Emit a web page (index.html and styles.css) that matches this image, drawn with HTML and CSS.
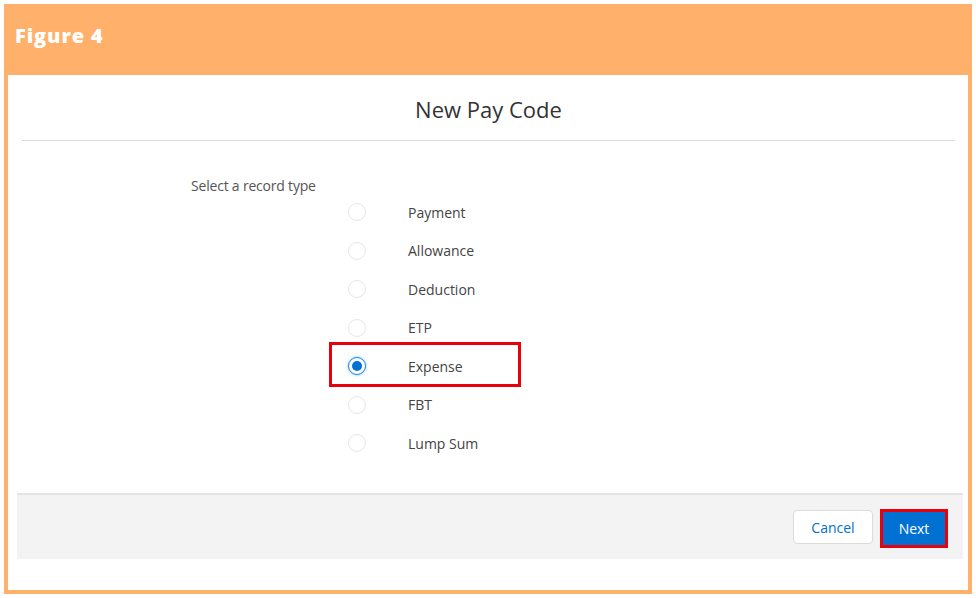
FILE: index.html
```html
<!DOCTYPE html>
<html lang="en">
<head>
    <meta charset="UTF-8">
    <title>Figure 4 - New Pay Code</title>
    <link rel="stylesheet" href="styles.css">
</head>
<body>
    <div class="figure">
        <div class="figure-header">Figure 4</div>
        <div class="figure-body">
            <div class="modal">
                <div class="modal-title">New Pay Code</div>
                <div class="modal-content">
                    <div class="field-label">Select a record type</div>
                    <div class="radio-list">
                        <label class="radio-row"><span class="radio"></span><span class="radio-text">Payment</span></label>
                        <label class="radio-row"><span class="radio"></span><span class="radio-text">Allowance</span></label>
                        <label class="radio-row"><span class="radio"></span><span class="radio-text">Deduction</span></label>
                        <label class="radio-row"><span class="radio"></span><span class="radio-text">ETP</span></label>
                        <label class="radio-row highlight"><span class="radio checked"></span><span class="radio-text">Expense</span></label>
                        <label class="radio-row"><span class="radio"></span><span class="radio-text">FBT</span></label>
                        <label class="radio-row"><span class="radio"></span><span class="radio-text">Lump Sum</span></label>
                    </div>
                </div>
                <div class="modal-footer">
                    <button class="btn btn-neutral">Cancel</button>
                    <button class="btn btn-brand">Next</button>
                </div>
            </div>
        </div>
    </div>
</body>
</html>
```

FILE: styles.css
```css
body {
    margin: 0;
    background: #fff;
    font-family: 'Open Sans', 'Noto Sans', sans-serif;
}
.figure {
    margin: 4px;
    width: 968px;
    height: 590px;
    box-sizing: border-box;
    border: 4px solid #ffb06b;
    border-top: none;
    display: flex;
    flex-direction: column;
}
.figure-header {
    background: #ffb06b;
    height: 71px;
    margin: 0 -4px;
    padding: 18px 0 0 11px;
    box-sizing: border-box;
    color: #fff;
    font-family: 'Open Sans', sans-serif;
    font-weight: 800;
    font-size: 20px;
    letter-spacing: 0.9px;
}
.figure-body {
    flex: 1;
    padding: 0 5px 0 9px;
}
.modal {
    display: flex;
    flex-direction: column;
}
.modal-title {
    margin: 0 8px 0 5px;
    height: 66px;
    box-sizing: border-box;
    border-bottom: 1px solid #dddbda;
    text-align: center;
    padding-top: 19px;
    font-size: 22px;
    color: #333;
}
.modal-content {
    padding: 36px 0 0 174px;
    height: 352px;
    box-sizing: border-box;
}
.field-label {
    font-size: 14px;
    letter-spacing: -0.2px;
    color: #555;
    line-height: 18px;
}
.radio-list {
    display: flex;
    flex-direction: column;
    margin-left: 145px;
    margin-top: -2px;
}
.radio-row {
    display: flex;
    align-items: center;
    height: 38.5px;
    width: 178px;
    box-sizing: border-box;
    padding-left: 12px;
    position: relative;
}
.radio {
    width: 18px;
    height: 18px;
    box-sizing: border-box;
    border: 1px solid #e6e6e6;
    border-radius: 50%;
    background: #fff;
}
.radio.checked {
    border: 1px solid #1589ee;
    box-shadow: 0 0 3px #7fbcf5;
    display: flex;
    align-items: center;
    justify-content: center;
}
.radio.checked::after {
    content: '';
    width: 10px;
    height: 10px;
    border-radius: 50%;
    background: #0070d2;
}
.radio-text {
    margin-left: 42px;
    font-size: 14px;
    color: #444;
}
.highlight::before {
    content: '';
    position: absolute;
    left: -7px;
    top: -5px;
    width: 192px;
    height: 45px;
    border: 3px solid #e8000b;
    box-sizing: border-box;
}
.modal-footer {
    background: #f3f3f3;
    border-top: 2px solid #e3e3e3;
    height: 66px;
    box-sizing: border-box;
    display: flex;
    justify-content: flex-end;
    align-items: center;
    gap: 7px;
    padding-right: 15px;
}
.btn {
    font-family: inherit;
    font-size: 14px;
    border-radius: 4px;
    cursor: pointer;
}
.btn-neutral {
    width: 80px;
    height: 34px;
    background: #fff;
    border: 1px solid #dddbda;
    color: #0070d2;
}
.btn-brand {
    width: 68px;
    height: 39px;
    margin-top: 2px;
    background: #0070d2;
    color: #fff;
    border: 3px solid #e8000b;
    border-radius: 0;
}
```
